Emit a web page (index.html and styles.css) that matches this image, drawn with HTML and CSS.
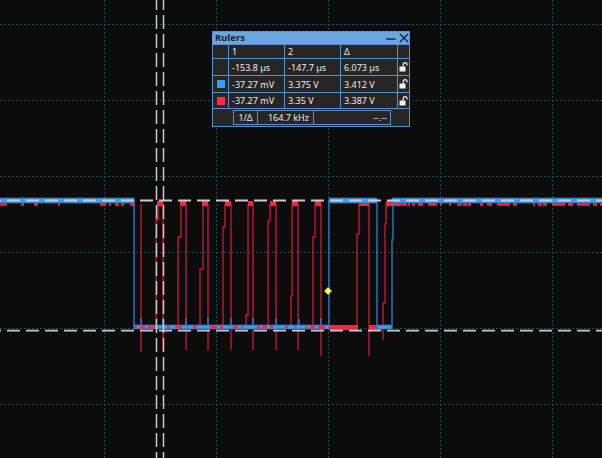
FILE: index.html
```html
<!DOCTYPE html>
<html lang="en">
<head>
  <meta charset="UTF-8">
  <meta name="viewport" content="width=device-width, initial-scale=1.0">
  <title>Scope - Rulers</title>
  <link rel="stylesheet" href="styles.css">
</head>
<body>
  <div class="scope">
    <svg class="plot" width="602" height="458" viewBox="0 0 602 458">
      <!-- graticule -->
      <g class="grid">
        <line x1="104.5" y1="0" x2="104.5" y2="458"/>
        <line x1="216.5" y1="0" x2="216.5" y2="458"/>
        <line x1="328.5" y1="0" x2="328.5" y2="458"/>
        <line x1="440.5" y1="0" x2="440.5" y2="458"/>
        <line x1="552.5" y1="0" x2="552.5" y2="458"/>
        <line x1="0" y1="24.5" x2="602" y2="24.5"/>
        <line x1="0" y1="100.5" x2="602" y2="100.5"/>
        <line x1="0" y1="176.5" x2="602" y2="176.5"/>
        <line x1="0" y1="252.5" x2="602" y2="252.5"/>
        <line x1="0" y1="328.5" x2="602" y2="328.5"/>
        <line x1="0" y1="404.5" x2="602" y2="404.5"/>
      </g>

      <!-- channel 2 (red) -->
      <g class="ch2">
        <path class="edge" d="M141 204 V352
          M156 328 V220 H158 V204 M163 204 V350
          M178 328 V237 H181 V204 M186 204 V350
          M200 328 V269 H203 V204 M208 204 V350
          M223 328 V227 H225 V204 M231 204 V350
          M246 328 V315 H248 V204 M253 204 V350
          M268 328 V221 H270 V204 M276 204 V350
          M291 328 V296 H292 V204 M298 204 V350
          M313 328 V237 H315 V204 M321 204 V356
          M357 328 V234 H359 V204 M369 204 V356
          M383 340 V303 H385 V224 H386 V204"/>
        <rect x="157" y="201" width="6" height="5"/>
        <rect x="180" y="201" width="6" height="5"/>
        <rect x="202" y="201" width="6" height="5"/>
        <rect x="225" y="201" width="6" height="5"/>
        <rect x="248" y="201" width="5" height="5"/>
        <rect x="270" y="201" width="6" height="5"/>
        <rect x="292" y="201" width="6" height="5"/>
        <rect x="315" y="201" width="6" height="5"/>
        <rect x="359" y="201" width="10" height="5"/>
        <rect x="386" y="201" width="14" height="5"/>
        <rect x="329" y="325" width="29" height="5"/>
        <rect x="369" y="325" width="14" height="5"/>
      </g>

      <!-- channel 1 (blue) -->
      <g class="ch1">
        <rect class="band" x="0" y="198" width="134" height="5"/>
        <rect class="band" x="329" y="198" width="48" height="5"/>
        <rect class="band" x="392" y="198" width="210" height="5"/>
        <rect class="band" x="134" y="325" width="195" height="4"/>
        <rect class="band" x="377" y="325" width="15" height="4"/>
        <path class="edge" d="M134 200 V327 M329 327 V200 M377 200 V327 M392 327 V240 H393 V200"/>
        <path class="edge" d="M141 325 V318 M163 325 V318 M186 325 V318 M208 325 V317 M231 325 V318 M253 325 V318 M276 325 V318 M299 325 V319 M321 325 V318"/>
      </g>

      <!-- red noise riding on the levels -->
      <g class="noise">
        <line x1="0" y1="204.5" x2="141" y2="204.5" stroke-dasharray="7 14 3 10 4 20 2 40 6 3 2 4 4 2 3 6 5 6"/>
        <line x1="135" y1="327" x2="329" y2="327" stroke-dasharray="2 3 5 3 7 12 3 5 7 5 1 5 4 13 7 3 3 10 5 4 1 14 3 2 5 3 3 12 3 7 1 9"/>
        <line x1="400" y1="204.5" x2="602" y2="204.5" stroke-dasharray="7 1 2 2 3 3 5 5 9 3 2 7 2 6 5 1 4 1 3 9 3 4 5 5 13 3 4 16 2 3 4 1 4 5 13 3 5 4 13 3 4 3 2"/>
      </g>

      <!-- cursors -->
      <g class="cursor">
        <line class="v" x1="156.5" y1="0" x2="156.5" y2="458"/>
        <line class="v" x1="163.5" y1="0" x2="163.5" y2="458"/>
        <line class="h" x1="0" y1="200.5" x2="602" y2="200.5"/>
        <line class="h" x1="0" y1="330.7" x2="602" y2="330.7"/>
      </g>

      <polygon class="marker" points="328,287.5 331.5,291 328,294.5 324.5,291"/>
    </svg>

    <div class="rulers">
      <div class="rulers-title">
        <span class="name">Rulers</span>
        <span class="win-btns">
          <svg width="10" height="9" viewBox="0 0 10 9"><line x1="0" y1="5" x2="9.5" y2="5"/></svg>
          <svg width="10" height="10" viewBox="0 0 10 10"><path d="M1 1 L9 9 M9 1 L1 9"/></svg>
        </span>
      </div>
      <div class="rulers-grid">
        <div></div><div>1</div><div>2</div><div>Δ</div><div></div>

        <div></div><div>-153.8 µs</div><div>-147.7 µs</div><div>6.073 µs</div>
        <div class="lock"><svg width="9" height="10" viewBox="0 0 9 10"><rect x="0.5" y="4.5" width="6" height="5"/><path d="M4.2 4.5 V2.6 a1.9 1.9 0 0 1 3.8 0 V3.6"/></svg></div>

        <div class="sw"><span class="swatch blue"></span></div><div>-37.27 mV</div><div>3.375 V</div><div>3.412 V</div>
        <div class="lock"><svg width="9" height="10" viewBox="0 0 9 10"><rect x="0.5" y="4.5" width="6" height="5"/><path d="M4.2 4.5 V2.6 a1.9 1.9 0 0 1 3.8 0 V3.6"/></svg></div>

        <div class="sw"><span class="swatch red"></span></div><div>-37.27 mV</div><div>3.35 V</div><div>3.387 V</div>
        <div class="lock"><svg width="9" height="10" viewBox="0 0 9 10"><rect x="0.5" y="4.5" width="6" height="5"/><path d="M4.2 4.5 V2.6 a1.9 1.9 0 0 1 3.8 0 V3.6"/></svg></div>
      </div>
      <div class="freq-row">
        <div class="freq-box">
          <span class="inv">1/Δ</span>
          <span class="freq">164.7 kHz</span>
          <span class="extra">--.--</span>
        </div>
      </div>
    </div>
  </div>
</body>
</html>
```

FILE: styles.css
```css
body {
  margin: 0;
  background-color: #0c0c0c;
  font-family: "Noto Sans", sans-serif;
}
.scope {
  position: relative;
  width: 602px;
  height: 458px;
  overflow: hidden;
  background-color: #0c0c0c;
}
.plot {
  display: block;
}
.grid line {
  stroke: #15505a;
  stroke-width: 1;
  stroke-dasharray: 2 2;
  shape-rendering: crispEdges;
}
.ch2 .edge {
  fill: none;
  stroke: #cc1838;
  stroke-width: 1.3;
}
.ch2 rect {
  fill: #ff2448;
}
.ch1 .band {
  fill: #3c9de8;
  stroke: #2a6aa8;
  stroke-width: 0.8;
}
.ch1 .edge {
  fill: none;
  stroke: #2f79c0;
  stroke-width: 1.4;
}
.noise line {
  stroke: #ff2448;
  stroke-width: 2.5;
}
.noise line:nth-child(2) {
  stroke-width: 3;
}
.cursor line {
  stroke: #cacaca;
}
.cursor .v {
  stroke-width: 1.5;
  stroke-dasharray: 14 5;
  stroke-dashoffset: 4;
}
.cursor .h {
  stroke-width: 1.8;
  stroke-dasharray: 13 6;
  stroke-dashoffset: 12;
}
.marker {
  fill: #ffff3c;
  stroke: #fffbb0;
  stroke-width: 0.6;
}

.rulers {
  position: absolute;
  left: 212px;
  top: 31px;
  width: 198px;
  box-sizing: border-box;
  border: 1px solid #5a90cb;
  background: #262626;
  color: #ececec;
  font-size: 9px;
}
.rulers-title {
  height: 13px;
  box-sizing: border-box;
  background: #6aa6e0;
  border-bottom: 1px solid #5a90cb;
  display: flex;
  align-items: center;
  justify-content: space-between;
  padding-left: 2px;
}
.rulers-title .name {
  font-weight: bold;
  font-size: 9.5px;
  line-height: 12px;
  color: #18212e;
}
.win-btns {
  display: flex;
  align-items: center;
  gap: 3px;
}
.win-btns svg {
  display: block;
  stroke: #18212e;
  stroke-width: 1.4;
  fill: none;
}
.rulers-grid {
  display: grid;
  grid-template-columns: 16px 56px 56px 57px 11px;
  grid-template-rows: 14px 17px 17px 16px;
}
.rulers-grid > div {
  box-sizing: border-box;
  border-right: 1px solid #5a90cb;
  border-bottom: 1px solid #5a90cb;
  display: flex;
  align-items: center;
  padding-left: 3px;
  white-space: nowrap;
  overflow: hidden;
}
.rulers-grid > div:nth-child(5n) {
  border-right: none;
}
.rulers-grid > .sw {
  padding-left: 0;
  justify-content: center;
}
.rulers-grid > .lock {
  padding-left: 1px;
}
.lock svg {
  display: block;
  fill: none;
  stroke: #f2f2f2;
  stroke-width: 1.2;
}
.lock svg rect {
  fill: #f2f2f2;
  stroke: none;
}
.swatch {
  display: block;
  width: 8px;
  height: 8px;
}
.swatch.blue {
  background: #3a9ff0;
}
.swatch.red {
  background: #ff2a50;
}
.freq-row {
  height: 17px;
  box-sizing: border-box;
  padding: 1px 0 1px 20px;
}
.freq-box {
  display: flex;
  width: 158px;
  height: 15px;
  box-sizing: border-box;
  border: 1px solid #5a90cb;
}
.freq-box span {
  display: flex;
  align-items: center;
  box-sizing: border-box;
  white-space: nowrap;
}
.freq-box .inv {
  width: 24px;
  justify-content: center;
  border-right: 1px solid #5a90cb;
}
.freq-box .freq {
  width: 56px;
  justify-content: flex-end;
  padding-right: 4px;
  border-right: 1px solid #5a90cb;
}
.freq-box .extra {
  flex: 1;
  justify-content: flex-end;
  padding-right: 3px;
}
```
